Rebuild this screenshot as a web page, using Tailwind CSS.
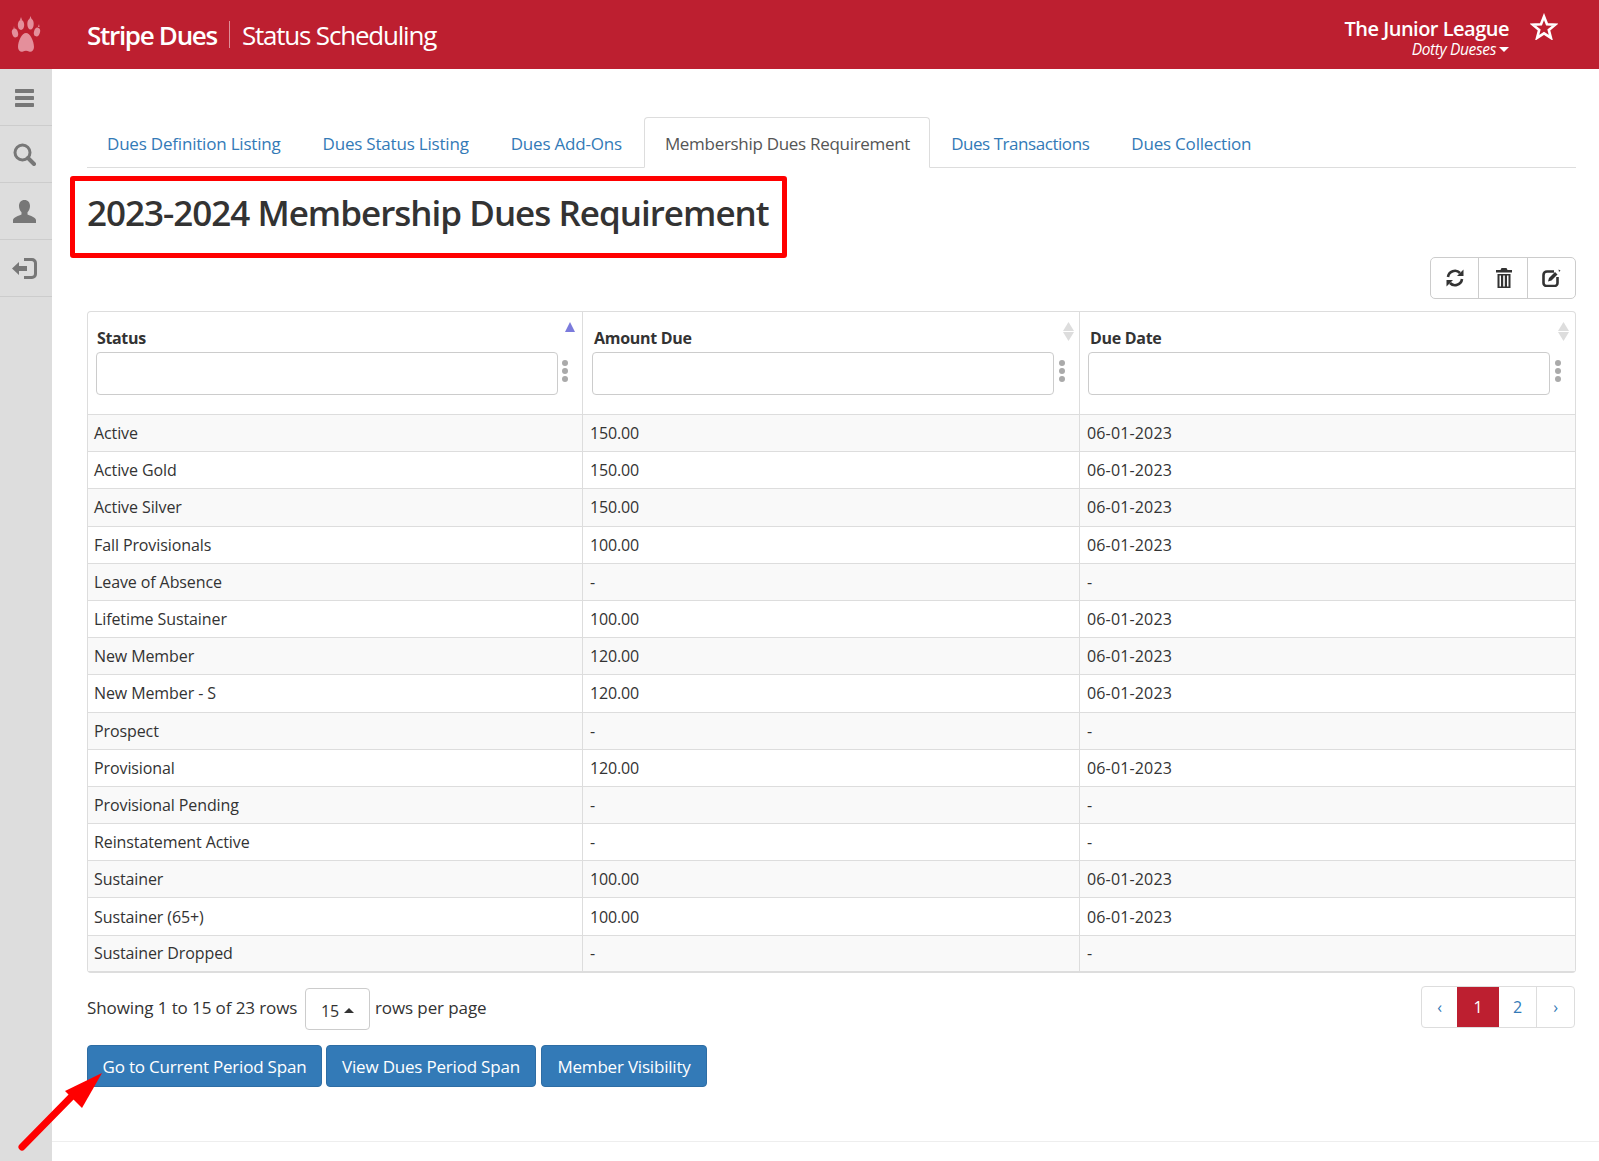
<!DOCTYPE html>
<html lang="en">
<head>
    <meta charset="UTF-8">
    <title>Stripe Dues - Status Scheduling</title>
    <script src="https://cdn.jsdelivr.net/npm/@tailwindcss/browser@4"></script>
</head>
<body class="relative w-[1599px] h-[1161px] overflow-hidden bg-white text-[#333] font-['Open_Sans',sans-serif] text-[16px] tracking-[-0.1px]">

    <!-- Top bar -->
    <header class="flex items-center h-[69px] bg-[#bd1f30] text-white">
        <div class="w-[87px] pl-[11px]">
            <svg width="30" height="37" viewBox="0 0 30 37" fill="#e48f9b">
                <ellipse cx="4" cy="17" rx="3" ry="4.5" transform="rotate(-15 4 17)"/>
                <ellipse cx="10" cy="9" rx="3.2" ry="5"/>
                <ellipse cx="19.5" cy="8" rx="3.2" ry="5.5"/>
                <ellipse cx="26" cy="16" rx="3" ry="4.5" transform="rotate(15 26 16)"/>
                <path d="M3 10l.5 3h-1zM10 1l1 3H9zM19.500 0l1 3h-2zM28 8l.5 3h-1.500z"/>
                <path d="M15 17c-4 0-8 8-8 14 0 4 3 5.500 5 4.500 2-1 4-1 6 0 2 1 5-.5 5-4.500 0-6-4-14-8-14z"/>
            </svg>
        </div>
        <div class="text-[26px] font-semibold tracking-[-1.3px] pt-[2px]">Stripe Dues</div>
        <div class="w-px h-[27px] bg-white/50 mx-3"></div>
        <div class="text-[26px] tracking-[-1.2px] pt-[2px]">Status Scheduling</div>
        <div class="ml-auto text-right pr-[90px] pt-[5px] relative">
            <div class="text-[20px] font-semibold leading-[24px] tracking-[-0.5px]">The Junior League</div>
            <div class="text-[15.5px] italic leading-[16px] flex items-center justify-end tracking-[-0.35px]">Dotty Dueses<span class="ml-[3px] border-x-[5px] border-x-transparent border-t-[5px] border-t-white"></span></div>
            <svg class="absolute right-[41px] top-[0.5px]" width="28" height="27" viewBox="0 0 28 27" fill="none" stroke="white" stroke-width="2.6">
                <path d="M14 3.5l3 7.7 8.2.5-6.4 5.2 2.1 8-6.9-4.5-6.9 4.5 2.1-8-6.4-5.2 8.2-.5z"/>
            </svg>
        </div>
    </header>

    <div class="flex h-[1092px]">
        <!-- Side rail -->
        <nav class="w-[52px] shrink-0 bg-[#ddd]">
            <div class="h-[57px] border-b border-[#ccc] flex items-center justify-center pr-[3px] pt-[2px]">
                <svg width="19" height="18" viewBox="0 0 19 18" fill="#777"><rect width="19" height="4" rx=".7"/><rect y="7" width="19" height="4" rx=".7"/><rect y="14" width="19" height="4" rx=".7"/></svg>
            </div>
            <div class="h-[57px] border-b border-[#ccc] flex items-center justify-center pr-[3px]">
                <svg width="23" height="23" viewBox="0 0 23 23" fill="none" stroke="#777"><circle cx="9.5" cy="9.5" r="7.5" stroke-width="3"/><path d="M15 15l6 6" stroke-width="4" stroke-linecap="round"/></svg>
            </div>
            <div class="h-[57px] border-b border-[#ccc] flex items-center justify-center pr-[3px]">
                <svg width="23" height="23" viewBox="0 0 23 23" fill="#777"><path d="M11.500 0c3.500 0 5.500 2.600 5.500 6 0 2.600-1 4.800-2.500 6.200v2.200c2.500 1.200 8.500 3 8.500 5.600v3H0v-3c0-2.600 6-4.400 8.500-5.600v-2.200C7 10.800 6 8.600 6 6c0-3.400 2-6 5.500-6z"/></svg>
            </div>
            <div class="h-[57px] border-b border-[#ccc] flex items-center justify-center pr-[4px] pt-[1px]">
                <svg width="25" height="21" viewBox="0 0 25 21" fill="#777"><path d="M0 10.500L7 4v4h8v5H7v4z"/><path d="M12 0h8a5 5 0 0 1 5 5v11a5 5 0 0 1-5 5h-8v-3h7.500a2.500 2.500 0 0 0 2.500-2.500v-10A2.500 2.500 0 0 0 19.500 3H12z"/></svg>
            </div>
        </nav>

        <main class="flex-1 pl-[35px] pr-[23px] pt-[48px]">
            <!-- Tabs -->
            <div class="flex h-[51px] border-b border-[#ddd] text-[#337ab7] text-[17px] tracking-[-0.2px]">
                <a class="px-5 mr-[2px] pt-[14px]">Dues Definition Listing</a>
                <a class="px-5 mr-[2px] pt-[14px]">Dues Status Listing</a>
                <a class="px-5 mr-[2px] pt-[14px]">Dues Add-Ons</a>
                <a class="pl-5 pr-[19px] mr-[1px] pt-[13px] h-[51px] border border-[#ddd] border-b-white rounded-t-[4px] bg-white text-[#555] tracking-[-0.3px]">Membership Dues Requirement</a>
                <a class="px-5 mr-[2px] pt-[14px] tracking-[-0.45px]">Dues Transactions</a>
                <a class="px-5 pt-[14px]">Dues Collection</a>
            </div>

            <h1 class="h-[89px] flex items-center text-[35px] font-semibold tracking-[-1px] text-[#333] pt-[2px]">2023-2024 Membership Dues Requirement</h1>

            <!-- Table toolbar -->
            <div class="flex justify-end">
                <div class="flex h-[42px] border border-[#ccc] rounded-[5px] text-[#333]">
                    <button class="w-[48px] pl-px flex items-center justify-center border-r border-[#ccc]">
                        <svg width="18" height="18" viewBox="0 0 18 18" fill="none" stroke="#333" stroke-width="2.600"><path d="M2 8a7 7 0 0 1 12-4"/><path d="M16 10a7 7 0 0 1-12 4"/><path d="M17.500 0.500v6.500h-6.500z" fill="#333" stroke="none"/><path d="M0.500 17.500v-6.500h6.500z" fill="#333" stroke="none"/></svg>
                    </button>
                    <button class="w-[49px] pl-px flex items-center justify-center border-r border-[#ccc]">
                        <svg width="16" height="20" viewBox="0 0 16 20" fill="#333"><path d="M5.500 0h5l1 2H16v2.500H0V2h4.500z"/><path d="M1.500 6h13v14h-13zM3.500 7.500v11h1.500v-11zM7.200 7.500v11h1.600v-11zM11 7.500v11h1.500v-11z" fill-rule="evenodd"/></svg>
                    </button>
                    <button class="w-[47px] flex items-center justify-center">
                        <svg width="19" height="18" viewBox="0 0 19 18" fill="none"><path d="M12 2.500H5A3.500 3.500 0 0 0 1.500 6v8a3 3 0 0 0 3 3h8a3 3 0 0 0 3-3V8" stroke="#333" stroke-width="2.600"/><path d="M6 12.500l1-3.500 6-6 2.500 2.500-6 6z" fill="#333"/><path d="M16.500 0.500l2 1-1.500 1.500z" fill="#333"/></svg>
                    </button>
                </div>
            </div>

            <!-- Dues table -->
            <div class="mt-[12px] w-[1489px] border border-[#ddd] border-b-[2px] rounded-[4px]">
                <div class="grid grid-cols-[495px_497px_1fr] h-[103px] border-b border-[#ddd]">
                    <div class="relative border-r border-[#ddd] pl-[8px] pt-[14px]">
                        <div class="font-bold pl-px leading-[24px] tracking-[-0.35px]">Status</div>
                        <input class="block mt-[2px] w-[462px] h-[43px] border border-[#ccc] rounded-[4px]">
                        <svg class="absolute left-[473px] top-[47px]" width="8" height="24" viewBox="0 0 8 24" fill="#aaa"><circle cx="4" cy="4" r="3"/><circle cx="4" cy="12" r="3"/><circle cx="4" cy="20" r="3"/></svg>
                        <span class="absolute left-[477px] top-[10px] border-x-[5.500px] border-x-transparent border-b-[10px] border-b-[#7b7bdc]"></span>
                    </div>
                    <div class="relative border-r border-[#ddd] pl-[9px] pt-[14px]">
                        <div class="font-bold pl-[2px] leading-[24px] tracking-[-0.3px]">Amount Due</div>
                        <input class="block mt-[2px] w-[462px] h-[43px] border border-[#ccc] rounded-[4px]">
                        <svg class="absolute left-[475px] top-[47px]" width="8" height="24" viewBox="0 0 8 24" fill="#aaa"><circle cx="4" cy="4" r="3"/><circle cx="4" cy="12" r="3"/><circle cx="4" cy="20" r="3"/></svg>
                        <svg class="absolute left-[480px] top-[10px]" width="11" height="19" viewBox="0 0 11 19" fill="#ddd"><path d="M5.500 0L11 9H0z"/><path d="M0 10h11l-5.500 9z"/></svg>
                    </div>
                    <div class="relative pl-[8px] pt-[14px]">
                        <div class="font-bold pl-[2px] leading-[24px] tracking-[-0.3px]">Due Date</div>
                        <input class="block mt-[2px] w-[462px] h-[43px] border border-[#ccc] rounded-[4px]">
                        <svg class="absolute left-[474px] top-[47px]" width="8" height="24" viewBox="0 0 8 24" fill="#aaa"><circle cx="4" cy="4" r="3"/><circle cx="4" cy="12" r="3"/><circle cx="4" cy="20" r="3"/></svg>
                        <svg class="absolute left-[478px] top-[10px]" width="11" height="19" viewBox="0 0 11 19" fill="#ddd"><path d="M5.500 0L11 9H0z"/><path d="M0 10h11l-5.500 9z"/></svg>
                    </div>
                </div>
                <div id="rows"></div>
            </div>

            <!-- Pagination row -->
            <div class="flex mt-[12.5px] h-[42px] text-[17px] tracking-[-0.1px]">
                <span class="pt-[9px] w-[218px]">Showing 1 to 15 of 23 rows</span>
                <button class="w-[65px] h-[42px] mt-[2px] border border-[#ccc] rounded-[4px] flex items-center justify-center pt-[4px] text-[16px]">15<span class="ml-[5px] border-x-[5px] border-x-transparent border-b-[5px] border-b-[#333]"></span></button>
                <span class="pt-[9px] ml-[5px]">rows per page</span>
                <div class="ml-auto mr-px flex h-[42px] border border-[#ddd] rounded-[4px] text-[#337ab7] text-[16px]">
                    <a class="w-[35px] flex items-center justify-center">‹</a>
                    <a class="w-[42px] flex items-center justify-center bg-[#bd1f30] text-white">1</a>
                    <a class="w-[38px] flex items-center justify-center border-r border-[#ddd]">2</a>
                    <a class="w-[37px] flex items-center justify-center">›</a>
                </div>
            </div>

            <!-- Actions -->
            <div class="flex mt-[17px] text-white text-[17px] tracking-[-0.2px]">
                <button class="w-[235px] h-[42px] pt-[2px] mr-[4px] bg-[#337ab7] border border-[#2e6da4] rounded-[4px]">Go to Current Period Span</button>
                <button class="w-[210px] h-[42px] pt-[2px] mr-[5px] bg-[#337ab7] border border-[#2e6da4] rounded-[4px]">View Dues Period Span</button>
                <button class="w-[166px] h-[42px] pt-[2px] bg-[#337ab7] border border-[#2e6da4] rounded-[4px]">Member Visibility</button>
            </div>

            <div class="-ml-[35px] -mr-[23px] mt-[54px] border-t border-[#eee]"></div>
        </main>
    </div>

    <!-- Annotations on the screenshot -->
    <div class="absolute left-[70px] top-[176px] w-[717px] h-[82px] border-[5px] border-[#f00] rounded-[3px]"></div>
    <svg class="absolute left-0 top-0 pointer-events-none" width="140" height="1161" viewBox="0 0 140 1161">
        <path d="M22 1147L76 1092" stroke="#f00" stroke-width="7" stroke-linecap="round"/>
        <path d="M102 1073L65 1091 82 1108z" fill="#f00"/>
    </svg>

    <script>
        // status, amount, due date
        const duesRows = [
            ['Active', '150.00', '06-01-2023'],
            ['Active Gold', '150.00', '06-01-2023'],
            ['Active Silver', '150.00', '06-01-2023'],
            ['Fall Provisionals', '100.00', '06-01-2023'],
            ['Leave of Absence', '-', '-'],
            ['Lifetime Sustainer', '100.00', '06-01-2023'],
            ['New Member', '120.00', '06-01-2023'],
            ['New Member - S', '120.00', '06-01-2023'],
            ['Prospect', '-', '-'],
            ['Provisional', '120.00', '06-01-2023'],
            ['Provisional Pending', '-', '-'],
            ['Reinstatement Active', '-', '-'],
            ['Sustainer', '100.00', '06-01-2023'],
            ['Sustainer (65+)', '100.00', '06-01-2023'],
            ['Sustainer Dropped', '-', '-']
        ];

        document.getElementById('rows').innerHTML = duesRows.map((row, i) => `
            <div class="grid grid-cols-[495px_497px_1fr] h-[37.2px] last:h-[35.6px] border-b border-[#ddd] last:border-b-0 ${i % 2 === 0 ? 'bg-[#f9f9f9]' : 'bg-white'}">
                <div class="flex items-center pl-[6px] border-r border-[#ddd]">${row[0]}</div>
                <div class="flex items-center pl-[7px] border-r border-[#ddd] tracking-[-0.15px]">${row[1]}</div>
                <div class="flex items-center pl-[7px] tracking-[0.15px]">${row[2]}</div>
            </div>`).join('');
    </script>
</body>
</html>
